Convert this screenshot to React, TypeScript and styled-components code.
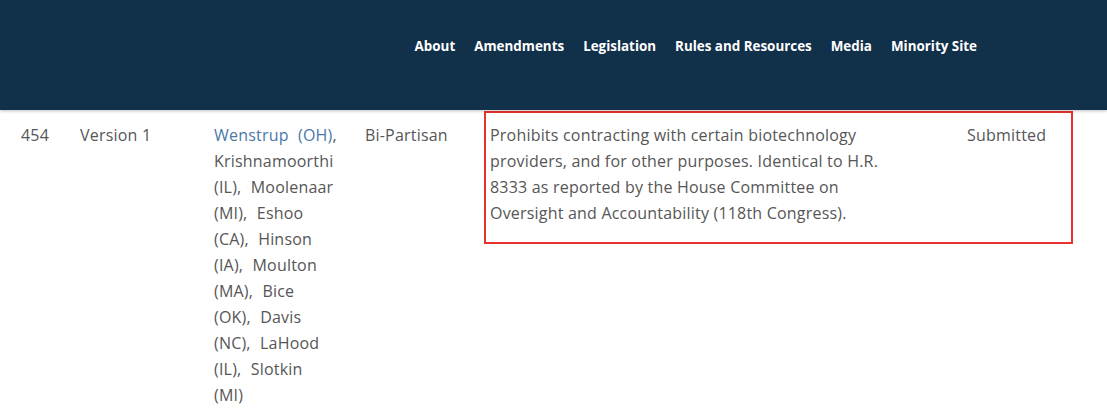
import styled, { createGlobalStyle } from 'styled-components'

const GlobalStyle = createGlobalStyle`
  body {
    margin: 0;
    background: #fff;
    font-family: "Open Sans", "Liberation Sans", sans-serif;
  }
`

const Header = styled.header`
  height: 110px;
  background: #11304a;
  box-shadow: 0 1px 3px rgba(0, 0, 0, 0.25);
  position: relative;
  z-index: 1;
  display: flex;
  justify-content: flex-end;
  padding-right: 130px;
`

const Nav = styled.nav`
  display: flex;
  gap: 19px;
  padding-top: 37px;
  align-items: flex-start;
`

const NavLink = styled.a`
  color: #fff;
  font-weight: 700;
  font-size: 13.4px;
  line-height: 18px;
  text-decoration: none;
`

const Row = styled.div`
  display: grid;
  grid-template-columns: 59px 134px 151px 119px auto;
  align-items: start;
  padding-left: 21px;
  color: #565656;
  font-size: 16px;
  letter-spacing: 0.2px;
  line-height: 26px;
`

const Cell = styled.div`
  padding-top: 12px;
`

const Sponsors = styled(Cell)`
  width: 124px;
  word-spacing: 5px;
`

const SponsorLink = styled.a`
  color: #4a78a8;
  text-decoration: none;
`

const Highlight = styled.div`
  margin-top: 1px;
  width: 581px;
  border: 2px solid #e8322d;
  padding: 9px 0 16px 4px;
  display: grid;
  grid-template-columns: 477px auto;
`

const Description = styled.div`
  max-width: 405px;
`

const Status = styled.div``

export default function App() {
  const navItems = ['About', 'Amendments', 'Legislation', 'Rules and Resources', 'Media', 'Minority Site']
  return (
    <>
      <GlobalStyle />
      <Header>
        <Nav>
          {navItems.map((item) => (
            <NavLink key={item} href="#">
              {item}
            </NavLink>
          ))}
        </Nav>
      </Header>
      <Row>
        <Cell>454</Cell>
        <Cell>Version 1</Cell>
        <Sponsors>
          <SponsorLink href="#">Wenstrup (OH)</SponsorLink>, Krishnamoorthi (IL), Moolenaar (MI), Eshoo (CA),
          Hinson (IA), Moulton (MA), Bice (OK), Davis (NC), LaHood (IL), Slotkin (MI)
        </Sponsors>
        <Cell>Bi-Partisan</Cell>
        <Highlight>
          <Description>
            Prohibits contracting with certain biotechnology providers, and for other purposes. Identical to H.R.
            8333 as reported by the House Committee on Oversight and Accountability (118th Congress).
          </Description>
          <Status>Submitted</Status>
        </Highlight>
      </Row>
    </>
  )
}
